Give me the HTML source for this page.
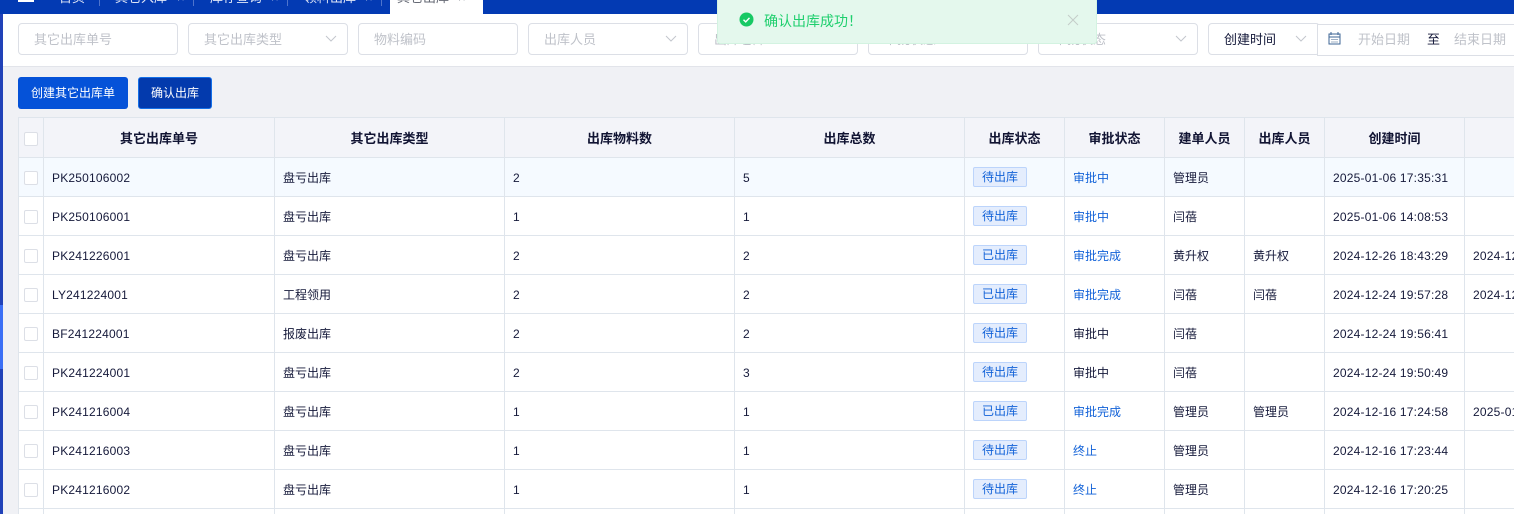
<!DOCTYPE html>
<html style="width:1514px;height:514px;overflow:hidden"><head><meta charset="utf-8"><style>
html,body{margin:0;padding:0}
body{width:1514px;height:514px;overflow:hidden;position:relative;background:#f0f1f5;font-family:"Liberation Sans","Noto Sans CJK SC",sans-serif;font-size:12px;color:#15193a}
.a{position:absolute}
#top{left:0;top:0;width:1514px;height:14px;background:#033ab3;overflow:hidden}
.tab{position:absolute;top:-11px;color:#dfe6f7;font-size:13px;line-height:18px;white-space:nowrap}
.sep{position:absolute;top:0;width:1px;height:6px;background:#4f74cc}
#filter{left:3px;top:14px;width:1511px;height:52px;background:#fff;border-bottom:1px solid #e2e4ea}
.inp{position:absolute;top:23px;height:30px;width:158px;border:1px solid #dcdfe6;border-radius:4px;background:#fff;color:#bfc2c9;font-size:13px;line-height:31px;text-indent:15px;white-space:nowrap;overflow:hidden}
.inp svg{position:absolute;right:10px;top:11px}
.btn{position:absolute;top:77px;height:32px;border-radius:3px;color:#fff;font-size:12px;line-height:33px;text-align:center;box-sizing:border-box}
#wrap{position:absolute;left:0;top:0;width:1514px;height:514px;overflow:hidden}
table{position:absolute;left:18px;top:117px;border-collapse:collapse;table-layout:fixed;width:1600px;background:#fff}
th,td{border:1px solid #dfe5ec;padding:0;white-space:nowrap;overflow:hidden}
th{height:39px;background:#f3f4f9;font-size:13px;font-weight:700;text-align:center;color:#111433}
td{height:38px;padding-left:8px;letter-spacing:.2px}
td:not(.z):not(.c){padding-top:2px;height:36px}
td.c,th.c{padding:0;text-align:center}
td.z{letter-spacing:0}
.cb{display:inline-block;width:12px;height:12px;border:1px solid #dcdfe6;border-radius:2px;background:#fff;vertical-align:middle;position:relative;top:1px}
.tag{display:inline-block;box-sizing:border-box;width:54px;height:20px;line-height:18px;text-align:center;background:#e4edfd;border:1px solid #bcd4fb;border-radius:2px;color:#1262d8;letter-spacing:0;vertical-align:middle}
.l{color:#1262d8}
#toast{left:717px;top:-5px;width:378px;height:48px;background:#e4f8ed;border:1px solid #d3f3e1;border-top:0;border-radius:0 0 3px 3px}
</style></head><body>
<div id="wrap">
<div class="a" style="left:0;top:0;width:3px;height:514px;background:#2142b8"></div>
<div class="a" style="left:0;top:305px;width:3px;height:64px;background:#3b6ff5"></div>
<div class="a" id="filter"></div>
<div class="a" id="top">
<div class="a" style="left:18px;top:0;width:16px;height:2px;background:#fff"></div>
<span class="tab" style="left:59px">首页</span><i class="sep" style="left:99px"></i>
<span class="tab" style="left:115px">其它入库</span><span class="tab" style="left:177px">×</span><i class="sep" style="left:193px"></i>
<span class="tab" style="left:210px">库存查询</span><span class="tab" style="left:271px">×</span><i class="sep" style="left:287px"></i>
<span class="tab" style="left:304px">领料出库</span><span class="tab" style="left:365px">×</span><i class="sep" style="left:381px"></i>
<div class="a" style="left:390px;top:0;width:93px;height:14px;background:#fff"></div>
<span class="tab" style="left:397px;color:#666a75">其它出库</span><span class="tab" style="left:458px;color:#666a75">×</span>
</div>
<div class="inp" style="left:18px">其它出库单号</div>
<div class="inp" style="left:188px">其它出库类型<svg width="12" height="8" viewBox="0 0 12 8"><path d="M1 1l5 5 5-5" fill="none" stroke="#c3c6cd"/></svg></div>
<div class="inp" style="left:358px">物料编码</div>
<div class="inp" style="left:528px">出库人员<svg width="12" height="8" viewBox="0 0 12 8"><path d="M1 1l5 5 5-5" fill="none" stroke="#c3c6cd"/></svg></div>
<div class="inp" style="left:698px">出库仓库</div>
<div class="inp" style="left:868px">审批状态</div>
<div class="inp" style="left:1038px">审批状态<svg width="12" height="8" viewBox="0 0 12 8"><path d="M1 1l5 5 5-5" fill="none" stroke="#c3c6cd"/></svg></div>
<div class="inp" style="left:1208px;width:110px;color:#15193a">创建时间<svg style="right:12px" width="12" height="8" viewBox="0 0 12 8"><path d="M1 1l5 5 5-5" fill="none" stroke="#c3c6cd"/></svg></div>
<div class="a" style="left:1317px;top:24px;width:200px;height:30px;border:1px solid #dcdfe6;background:#fff"></div>
<svg class="a" style="left:1328px;top:32px" width="13" height="13" viewBox="0 0 13 13"><rect x="1" y="2" width="11" height="10" fill="#fff" stroke="#3d6696"/><path d="M1 5h11" stroke="#3d6696"/><path d="M3 0v3M10 0v3" stroke="#3d6696"/><path d="M3 7.5h7M3 10h7" stroke="#9fb0c6"/></svg>
<span class="a" style="left:1358px;top:31px;font-size:13px;line-height:18px;color:#bfc2c9">开始日期</span>
<span class="a" style="left:1427px;top:31px;font-size:13px;line-height:18px;color:#15193a">至</span>
<span class="a" style="left:1454px;top:31px;font-size:13px;line-height:18px;color:#bfc2c9">结束日期</span>
<div class="btn" style="left:18px;width:110px;background:#0552d8">创建其它出库单</div>
<div class="btn" style="left:138px;width:74px;background:#033aad;border:1px solid #1470e8;line-height:31px">确认出库</div>
<table><colgroup><col style="width:25px"><col style="width:231px"><col style="width:230px"><col style="width:230px"><col style="width:230px"><col style="width:100px"><col style="width:100px"><col style="width:80px"><col style="width:80px"><col style="width:140px"><col style="width:154px"></colgroup>
<tr><th class="c"><span class="cb"></span></th><th>其它出库单号</th><th>其它出库类型</th><th>出库物料数</th><th>出库总数</th><th>出库状态</th><th>审批状态</th><th>建单人员</th><th>出库人员</th><th>创建时间</th><th>出库时间</th></tr>
<tr style="background:#f5faff"><td class="c"><span class="cb"></span></td><td>PK250106002</td><td class="z">盘亏出库</td><td>2</td><td>5</td><td class="z"><span class="tag">待出库</span></td><td class="z l">审批中</td><td class="z">管理员</td><td></td><td>2025-01-06 17:35:31</td><td></td></tr>
<tr><td class="c"><span class="cb"></span></td><td>PK250106001</td><td class="z">盘亏出库</td><td>1</td><td>1</td><td class="z"><span class="tag">待出库</span></td><td class="z l">审批中</td><td class="z">闫蓓</td><td></td><td>2025-01-06 14:08:53</td><td></td></tr>
<tr><td class="c"><span class="cb"></span></td><td>PK241226001</td><td class="z">盘亏出库</td><td>2</td><td>2</td><td class="z"><span class="tag">已出库</span></td><td class="z l">审批完成</td><td class="z">黄升权</td><td class="z">黄升权</td><td>2024-12-26 18:43:29</td><td>2024-12-26 18:44:02</td></tr>
<tr><td class="c"><span class="cb"></span></td><td>LY241224001</td><td class="z">工程领用</td><td>2</td><td>2</td><td class="z"><span class="tag">已出库</span></td><td class="z l">审批完成</td><td class="z">闫蓓</td><td class="z">闫蓓</td><td>2024-12-24 19:57:28</td><td>2024-12-24 19:58:10</td></tr>
<tr><td class="c"><span class="cb"></span></td><td>BF241224001</td><td class="z">报废出库</td><td>2</td><td>2</td><td class="z"><span class="tag">待出库</span></td><td class="z">审批中</td><td class="z">闫蓓</td><td></td><td>2024-12-24 19:56:41</td><td></td></tr>
<tr><td class="c"><span class="cb"></span></td><td>PK241224001</td><td class="z">盘亏出库</td><td>2</td><td>3</td><td class="z"><span class="tag">待出库</span></td><td class="z">审批中</td><td class="z">闫蓓</td><td></td><td>2024-12-24 19:50:49</td><td></td></tr>
<tr><td class="c"><span class="cb"></span></td><td>PK241216004</td><td class="z">盘亏出库</td><td>1</td><td>1</td><td class="z"><span class="tag">已出库</span></td><td class="z l">审批完成</td><td class="z">管理员</td><td class="z">管理员</td><td>2024-12-16 17:24:58</td><td>2025-01-06 10:12:30</td></tr>
<tr><td class="c"><span class="cb"></span></td><td>PK241216003</td><td class="z">盘亏出库</td><td>1</td><td>1</td><td class="z"><span class="tag">待出库</span></td><td class="z l">终止</td><td class="z">管理员</td><td></td><td>2024-12-16 17:23:44</td><td></td></tr>
<tr><td class="c"><span class="cb"></span></td><td>PK241216002</td><td class="z">盘亏出库</td><td>1</td><td>1</td><td class="z"><span class="tag">待出库</span></td><td class="z l">终止</td><td class="z">管理员</td><td></td><td>2024-12-16 17:20:25</td><td></td></tr>
</table>
<div class="a" style="left:18px;top:509px;width:1496px;height:5px;background:#fff"></div>
<div class="a" style="left:18px;top:509px;width:1px;height:5px;background:#dfe5ec;box-shadow:25px 0 #dfe5ec,256px 0 #dfe5ec,486px 0 #dfe5ec,716px 0 #dfe5ec,946px 0 #dfe5ec,1046px 0 #dfe5ec,1146px 0 #dfe5ec,1226px 0 #dfe5ec,1306px 0 #dfe5ec,1446px 0 #dfe5ec"></div>
<div class="a" id="toast">
<svg class="a" style="left:21px;top:17px" width="15" height="15" viewBox="0 0 15 15"><circle cx="7.5" cy="7.5" r="7" fill="#17c964"/><path d="M4.5 7.8l2.2 2.1 3.8-4" fill="none" stroke="#fff" stroke-width="1.4"/></svg>
<span class="a" style="left:46px;top:17px;font-size:14px;line-height:18px;color:#1fcf6e;white-space:nowrap">确认出库成功！</span>
<svg class="a" style="left:349px;top:19px" width="12" height="12" viewBox="0 0 12 12"><path d="M1 1l10 10M11 1L1 11" stroke="#c4cdc9" stroke-width="1"/></svg>
</div>
</div>
</body></html>
